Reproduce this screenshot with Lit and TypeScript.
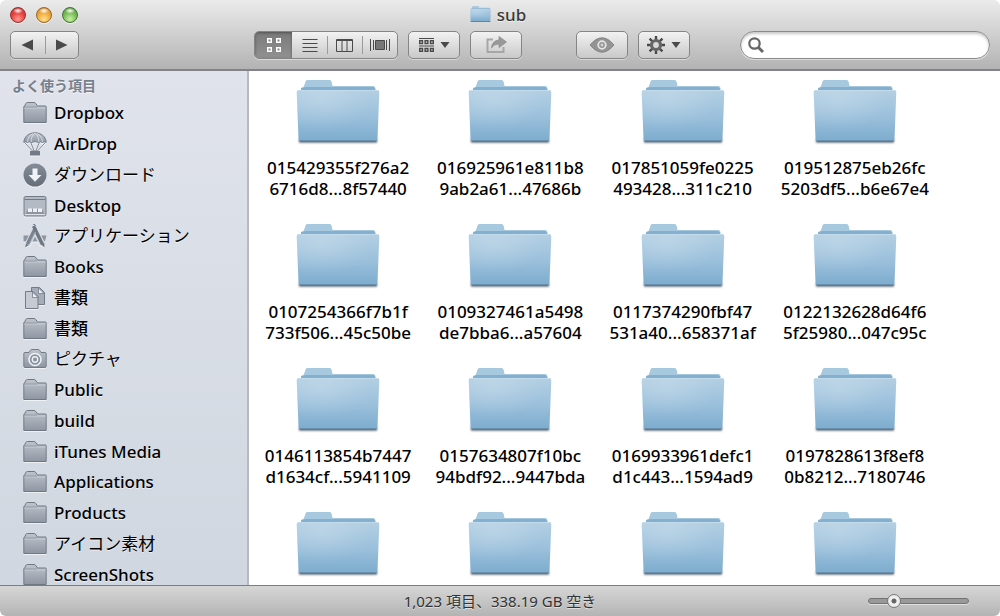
import { LitElement, html, svg, css, nothing } from "lit";
import { customElement, property, state } from "lit/decorators.js";
import { classMap } from "lit/directives/class-map.js";

type IconName = "folder" | "airdrop" | "download" | "desktop" | "apps" | "documents" | "camera";

interface Place {
  label: string;
  icon: IconName;
}

const PLACES: Place[] = [
  { label: "Dropbox", icon: "folder" },
  { label: "AirDrop", icon: "airdrop" },
  { label: "ダウンロード", icon: "download" },
  { label: "Desktop", icon: "desktop" },
  { label: "アプリケーション", icon: "apps" },
  { label: "Books", icon: "folder" },
  { label: "書類", icon: "documents" },
  { label: "書類", icon: "folder" },
  { label: "ピクチャ", icon: "camera" },
  { label: "Public", icon: "folder" },
  { label: "build", icon: "folder" },
  { label: "iTunes Media", icon: "folder" },
  { label: "Applications", icon: "folder" },
  { label: "Products", icon: "folder" },
  { label: "アイコン素材", icon: "folder" },
  { label: "ScreenShots", icon: "folder" },
];

const FOLDERS: string[][] = [
  ["015429355f276a2", "6716d8...8f57440"],
  ["016925961e811b8", "9ab2a61...47686b"],
  ["017851059fe0225", "493428...311c210"],
  ["019512875eb26fc", "5203df5...b6e67e4"],
  ["0107254366f7b1f", "733f506...45c50be"],
  ["0109327461a5498", "de7bba6...a57604"],
  ["0117374290fbf47", "531a40...658371af"],
  ["0122132628d64f6", "5f25980...047c95c"],
  ["0146113854b7447", "d1634cf...5941109"],
  ["0157634807f10bc", "94bdf92...9447bda"],
  ["0169933961defc1", "d1c443...1594ad9"],
  ["0197828613f8ef8", "0b8212...7180746"],
  [],
  [],
  [],
  [],
];

const FONT = css`"Noto Sans", "Noto Sans CJK JP", sans-serif`;

/* Small grey sidebar glyphs, all on a 24 x 24 grid. */
const GLYPHS = {
  folder: svg`
    <path d="M.8 21.500V6q0-1 1-1.200L2.800 2.500Q3.200 1.500 4.500 1.500h6.500q1 0 1.500.7L14.500 5h8q.7 0 .7.700V21.500z" fill="url(#g)" stroke="#6f7782"/>
    <path d="M1.500 7h21" stroke="#c9ced6"/><path d="M1 6h13" stroke="#8b939f" stroke-width=".8"/>`,
  airdrop: svg`
    <path d="M2 11 9.500 19h5L22 11M8 11l3 8M16 11l-3 8" fill="none" stroke="#838b96"/>
    <path d="M.8 10.500C1 4.500 6 .8 12 .8s11 3.700 11.200 9.700q-1.800-1.500-3.700 0-1.800-1.500-3.700 0-3.800-1.800-7.600 0-1.900-1.500-3.700 0-1.900-1.500-3.700 0z" fill="url(#g)" stroke="#737b87"/>
    <path d="M8.200 10Q8 4 12 1q4 3 3.800 9M4.500 10Q5 4 10 1.500M19.500 10Q19 4 14 1.500" fill="none" stroke="#e0e4ea" stroke-width=".8"/>
    <rect x="7" y="19" width="10" height="4.500" fill="#737b87"/>`,
  download: svg`
    <circle cx="12" cy="12" r="11.500" fill="url(#d)"/>
    <path d="M9.500 5.500h5v6.500h4L12 18.800 5.500 12h4z" fill="#f0f3f7"/>`,
  desktop: svg`
    <rect x="1" y="2.500" width="22" height="19.500" rx="1.500" fill="#b4bac4" stroke="#737b87"/>
    <path d="M1.500 5.500h21" stroke="#737b87"/>
    <path d="M2 20.800 5 15h14l3 5.800z" fill="#8d95a1"/>
    <path d="M5 14.500h4V18H5zM10 14.500h4V18h-4zM15 14.500h4V18h-4z" fill="#eef1f5"/>
    <path d="M2 20.500h20" stroke="#dfe3e8"/>`,
  apps: svg`
    <path d="M.5 11.500H23.500L22 17.500H.5z" fill="#8d95a1"/>
    <path d="M12 6 4.500 20.500M12 6l7.500 14.500" stroke="#d9dee6" stroke-width="6"/>
    <path d="M12.500 4 4.500 20" stroke="#7b8390" stroke-width="3.600"/>
    <path d="m10.500 2 9 18.500" stroke="#6f7782" stroke-width="3.400"/>
    <path d="m12.500 8-5.500 11" stroke="#aeb5c0" stroke-width="1"/>
    <path d="m2.800 19.500-.5 4 3.700-2.500zM18 20.500l3.500 3-.2-4.500z" fill="#6f7782"/>
    <path d="m10.200 1 1-1 1.500 2" stroke="#6f7782" fill="none"/>`,
  documents: svg`
    <path d="M8.500 1.500h8l5 5v12h-13z" fill="#a5adb9" stroke="#737b87"/>
    <path d="M15.500 2v5.500h5.500z" fill="#eef1f5" stroke="#737b87" stroke-width=".8"/>
    <path d="M2.500 5.500H10l5 5v12H2.500z" fill="#c5cad3" stroke="#737b87"/>
    <path d="M9.500 6v5.500H15z" fill="#eef1f5" stroke="#737b87" stroke-width=".8"/>`,
  camera: svg`
    <path d="M2 5.500h4l1.500-2.300q.5-.7 1.500-.7h6q1 0 1.500.7L18 5.500h4q1.200 0 1.200 1.200v12.600q0 1.200-1.200 1.200H2q-1.200 0-1.200-1.200V6.700Q.8 5.500 2 5.500z" fill="url(#g)" stroke="#737b87"/>
    <circle cx="12" cy="12.500" r="6" fill="#8a929e" stroke="#eef1f5" stroke-width="1.600"/>
    <circle cx="12" cy="12.500" r="2.700" fill="#8a929e" stroke="#eef1f5" stroke-width="1.400"/>`,
};

@customElement("place-icon")
class PlaceIcon extends LitElement {
  @property() name: IconName = "folder";

  static styles = css`
    :host {
      display: block;
      width: 24px;
      height: 24px;
      filter: drop-shadow(0 1px 0 rgba(255, 255, 255, 0.6));
    }
    .glyph {
      display: block;
      width: 100%;
      height: 100%;
    }
  `;

  render() {
    return html`<svg class="glyph" viewBox="0 0 24 24" aria-hidden="true">
      <defs>
        <linearGradient id="g" x1="0" y1="0" x2="0" y2="1">
          <stop offset="0" stop-color="#bfc4cc" />
          <stop offset="1" stop-color="#8e96a2" />
        </linearGradient>
        <linearGradient id="d" x1="0" y1="0" x2="0" y2="1">
          <stop offset="0" stop-color="#858d98" />
          <stop offset="1" stop-color="#656d79" />
        </linearGradient>
      </defs>
      ${GLYPHS[this.name]}
    </svg>`;
  }
}

@customElement("blue-folder")
class BlueFolder extends LitElement {
  static styles = css`
    :host {
      display: block;
    }
    .art {
      display: block;
      width: 100%;
    }
  `;

  render() {
    return html`<svg class="art" viewBox="0 0 84 66" aria-hidden="true">
      <defs>
        <linearGradient id="front" x1="0" y1="0" x2="0" y2="1">
          <stop offset="0" stop-color="#b3cfe3" />
          <stop offset=".5" stop-color="#9cc1dc" />
          <stop offset="1" stop-color="#7dacce" />
        </linearGradient>
        <radialGradient id="shine" cx=".3" cy=".2" r=".6">
          <stop offset="0" stop-color="#fff" stop-opacity=".18" />
          <stop offset="1" stop-color="#fff" stop-opacity="0" />
        </radialGradient>
        <filter id="soft" x="-5%" y="-100%" width="110%" height="300%">
          <feGaussianBlur stdDeviation=".8" />
        </filter>
      </defs>
      <rect x="3" y="60" width="78" height="3.500" fill="#46586a" filter="url(#soft)" />
      <path d="M5 14V9l3-1.500 1.500-4.500Q10 1 12 1h21q2 0 2.500 2l1 4H77q2 0 2.500 2l.5 5z" fill="#a5c8de" />
      <path d="M36.500 8H76.500q2 0 2.500 2v2H5V9.500l4-1.500z" fill="#84afcf" />
      <path d="M9.500 3Q10 1 12 1h21q2 0 2.500 2l1 5H8z" fill="#a7c9df" />
      <path d="M3 11h78q2.500 0 2.300 2.500L81.500 60q-.1 2-2 2h-75q-1.900 0-2-2L.7 13.500Q.5 11 3 11z" fill="url(#front)" />
      <path d="M3 11h78q2.500 0 2.300 2.500L81.500 60q-.1 2-2 2h-75q-1.900 0-2-2L.7 13.500Q.5 11 3 11z" fill="url(#shine)" />
      <path d="M2.500 11.500h79" stroke="#c3dbeb" />
      <path d="M3.500 62h77" stroke="#56748c" />
    </svg>`;
  }
}

@customElement("window-toolbar")
class WindowToolbar extends LitElement {
  @state() private view = 0;

  static styles = css`
    :host {
      display: flex;
      flex-direction: column;
      box-sizing: border-box;
      height: 71px;
      padding: 0 10px;
      border-bottom: 2px solid #838387;
      border-radius: 6px 6px 0 0;
      background: linear-gradient(#ebebeb, #d2d2d2 45%, #b3b3b3);
      font-family: ${FONT};
    }
    .title-row {
      display: grid;
      grid-template-columns: 1fr auto 1fr;
      align-items: center;
      height: 29px;
      margin-bottom: 2px;
    }
    .lights {
      display: flex;
      gap: 10px;
    }
    .light {
      width: 16px;
      height: 16px;
      padding: 0;
      border: 1px solid;
      border-radius: 50%;
      box-shadow: 0 1px 0 rgba(255, 255, 255, 0.6);
    }
    .close {
      border-color: #8f2f2c;
      background: radial-gradient(ellipse 5px 3px at 50% 20%, #fff, #fff0), radial-gradient(circle at 50% 80%, #ff9a92, #e8423e 50%, #b92f2e);
    }
    .minimize {
      border-color: #96652a;
      background: radial-gradient(ellipse 5px 3px at 50% 20%, #fff, #fff0), radial-gradient(circle at 50% 80%, #ffe28c, #f0aa3c 50%, #c5822c);
    }
    .zoom {
      border-color: #447035;
      background: radial-gradient(ellipse 5px 3px at 50% 20%, #fff, #fff0), radial-gradient(circle at 50% 80%, #c9f2a2, #78bd58 50%, #4c8f3c);
    }
    .title {
      display: flex;
      align-items: center;
      gap: 6px;
      margin: 0;
      padding-right: 4px;
      font-size: 17px;
      font-weight: 500;
      line-height: 24px;
      color: #3a3a3a;
      text-shadow: 0 1px 0 rgba(255, 255, 255, 0.6);
    }
    .title-folder {
      width: 21px;
    }
    .tools {
      display: flex;
      height: 28px;
    }
    .group {
      display: flex;
      flex: none;
      box-sizing: border-box;
      border: 1px solid #858585;
      border-radius: 5px;
      overflow: hidden;
      background: linear-gradient(#f2f2f2, #c9c9c9);
      box-shadow: 0 1px 0 rgba(255, 255, 255, 0.45);
    }
    .group + .group {
      margin-left: 10px;
    }
    .group.views {
      width: 144px;
      margin-left: 175px;
    }
    .group.quick {
      margin-left: 54px;
    }
    .nav {
      width: 69px;
    }
    .tool {
      position: relative;
      display: flex;
      flex: none;
      align-items: center;
      justify-content: center;
      gap: 6px;
      padding: 0;
      border: 0;
      background: none;
      color: #4a4a4a;
    }
    .nav .tool {
      flex: 1;
    }
    .views .tool {
      width: 35px;
    }
    .views .tool:first-child {
      width: 37px;
    }
    .single .tool {
      width: 50px;
    }
    .tool + .tool::before {
      content: "";
      position: absolute;
      left: 0;
      top: 4px;
      bottom: 4px;
      width: 1px;
      background: #9b9b9b;
    }
    .tool.active {
      background: linear-gradient(#7a7a7a, #919191);
      box-shadow: inset 0 1px 3px rgba(0, 0, 0, 0.35);
      color: #fff;
    }
    .tool.active + .tool::before {
      display: none;
    }
    .faint {
      color: #949494;
    }
    .pic {
      display: block;
      flex: none;
      fill: none;
      stroke: currentColor;
    }
    .search {
      display: flex;
      flex: 1;
      align-items: center;
      gap: 6px;
      box-sizing: border-box;
      min-width: 0;
      margin-left: 50px;
      padding: 0 12px 0 6px;
      border: 1px solid #8a8a8a;
      border-radius: 14px;
      background: #fff;
      box-shadow: inset 0 2px 3px rgba(0, 0, 0, 0.22), 0 1px 0 rgba(255, 255, 255, 0.5);
      color: #666;
    }
    .query {
      flex: 1;
      min-width: 0;
      padding: 0;
      border: 0;
      outline: 0;
      background: none;
      font: 15px ${FONT};
    }
  `;

  private viewButton(index: number, label: string, picture: unknown) {
    return html`<button
      class=${classMap({ tool: true, active: this.view === index })}
      aria-label=${label}
      aria-pressed=${this.view === index}
      @click=${() => (this.view = index)}
    >
      ${picture}
    </button>`;
  }

  render() {
    const arrow = html`<svg class="pic" width="10" height="6" viewBox="0 0 10 6"><path d="M.5 0h9L5 6z" fill="currentColor" stroke="none" /></svg>`;
    return html`
      <div class="title-row">
        <div class="lights">
          <button class="light close" aria-label="閉じる"></button>
          <button class="light minimize" aria-label="しまう"></button>
          <button class="light zoom" aria-label="拡大"></button>
        </div>
        <h1 class="title"><blue-folder class="title-folder"></blue-folder>sub</h1>
      </div>
      <div class="tools">
        <div class="group nav">
          <button class="tool" aria-label="戻る">
            <svg class="pic" width="13" height="12" viewBox="0 0 13 12"><path d="M.5 6 12 .5v11z" fill="currentColor" stroke="none" /></svg>
          </button>
          <button class="tool" aria-label="進む">
            <svg class="pic" width="13" height="12" viewBox="0 0 13 12"><path d="M12.500 6 1 .5v11z" fill="currentColor" stroke="none" /></svg>
          </button>
        </div>
        <div class="group views">
          ${this.viewButton(0, "アイコン", html`<svg class="pic" width="16" height="16" viewBox="0 0 16 16" stroke-width="1.500"><path d="M1.750 1.750h3.500v3.500h-3.500zM10.750 1.750h3.500v3.500h-3.500zM1.750 10.750h3.500v3.500h-3.500zM10.750 10.750h3.500v3.500h-3.500z" /></svg>`)}
          ${this.viewButton(1, "リスト", html`<svg class="pic" width="16" height="14" viewBox="0 0 16 14"><path d="M.5 1.500h15M.5 5.500h15M.5 9.500h15M.5 13.500h15" /></svg>`)}
          ${this.viewButton(2, "カラム", html`<svg class="pic" width="17" height="13" viewBox="0 0 17 13"><path d="M.5 .5h16v12H.5zM6 1v11M11 1v11M.5 1.500h16" /></svg>`)}
          ${this.viewButton(3, "Cover Flow", html`<svg class="pic" width="20" height="14" viewBox="0 0 20 14"><path d="M.5 1v12M3.500 2v10M16.500 2v10M19.500 1v12" /><path d="M5.500 2.500h9v9h-9z" fill="#777" /></svg>`)}
        </div>
        <div class="group single">
          <button class="tool" aria-label="並べ替え">
            <svg class="pic" width="15" height="16" viewBox="0 0 15 16"><path d="M0 1.500h15M0 9h15" stroke-width="1.200" /><path d="M.7 3.700h2.800v2.800H.7zM6.100 3.700h2.800v2.800H6.100zM11.500 3.700h2.800v2.800h-2.800zM.7 11.500h2.800v2.800H.7zM6.100 11.500h2.800v2.800H6.100zM11.500 11.500h2.800v2.800h-2.800z" stroke-width="1.400" /></svg>
            ${arrow}
          </button>
        </div>
        <div class="group single">
          <button class="tool faint" aria-label="共有">
            <svg class="pic" width="22" height="18" viewBox="0 0 22 18"><path d="M8 3.500H2.500v12.500H18.500v-5" stroke-width="2" stroke="#a6a6a6" /><path d="M6.500 12Q7 4.500 14 4V.5L21.500 6 14 11.500V8Q9 8 6.500 12z" fill="#999" stroke="#8a8a8a" stroke-width=".7" /></svg>
          </button>
        </div>
        <div class="group single quick">
          <button class="tool faint" aria-label="クイックルック">
            <svg class="pic" width="26" height="16" viewBox="0 0 26 16"><path d="M1 8Q7 .8 13 .8T25 8Q19 15.200 13 15.200T1 8z" fill="currentColor" stroke="#858585" /><circle cx="13" cy="8" r="3.800" stroke="#e4e4e4" stroke-width="1.800" /><circle cx="13" cy="8" r="1.400" fill="#d5d5d5" stroke="none" /></svg>
          </button>
        </div>
        <div class="group single">
          <button class="tool" aria-label="アクション">
            <svg class="pic" width="18" height="18" viewBox="0 0 18 18"><path d="M9 0v18M0 9h18M2.600 2.600l12.800 12.800M15.400 2.600 2.600 15.400" stroke-width="2.400" /><circle cx="9" cy="9" r="4.500" fill="#d8d8d8" stroke="#666" stroke-width="3.200" /></svg>
            ${arrow}
          </button>
        </div>
        <label class="search">
          <svg class="pic" width="18" height="18" viewBox="0 0 18 18" aria-hidden="true"><circle cx="7.500" cy="7.500" r="5.200" stroke-width="2.200" /><path d="m11.500 11.500 4.500 4.500" stroke-width="3" /></svg>
          <input class="query" type="search" aria-label="検索" />
        </label>
      </div>
    `;
  }
}

@customElement("app-root")
class AppRoot extends LitElement {
  @state() private iconSize = 21;

  static styles = css`
    :host {
      display: flex;
      flex-direction: column;
      height: 100vh;
      overflow: hidden;
      background: #fff;
      font-family: ${FONT};
      font-weight: 500;
      color: #000;
    }
    .body {
      display: flex;
      flex: 1;
      min-height: 0;
    }
    .sidebar {
      display: flex;
      flex: none;
      flex-direction: column;
      box-sizing: border-box;
      width: 249px;
      overflow: hidden;
      border-right: 2px solid #b6b9c0;
      background: linear-gradient(#e0e3eb, #d0d7e0);
    }
    .heading {
      margin: 0;
      padding: 4px 12px 1px;
      font-size: 14px;
      font-weight: 700;
      line-height: 22px;
      color: #75808d;
      text-shadow: 0 1px 0 rgba(255, 255, 255, 0.7);
    }
    .places {
      display: grid;
      flex: 1;
      grid-auto-rows: 1fr;
      margin: 0 0 -5px;
      padding: 0;
      list-style: none;
    }
    .place {
      display: flex;
      align-items: center;
      gap: 7px;
      height: 100%;
      padding-left: 23px;
      font-size: 17px;
      line-height: 24px;
      color: #000;
      text-decoration: none;
      text-shadow: 0 1px 0 rgba(255, 255, 255, 0.6);
    }
    .place.kana {
      font-weight: 400;
    }
    .content {
      flex: 1;
      min-width: 0;
      overflow: hidden;
    }
    .folders {
      display: grid;
      grid-template-columns: repeat(4, 1fr);
      grid-auto-rows: 144px;
      margin: 0;
      padding: 8px 59px 0 3px;
      list-style: none;
    }
    .folder {
      display: flex;
      flex-direction: column;
      align-items: center;
      gap: 12px;
      font-size: 17px;
      line-height: 21px;
      color: #000;
      text-align: center;
      text-decoration: none;
    }
    .folder-icon {
      width: 84px;
    }
    .status {
      display: grid;
      grid-template-columns: 1fr auto 1fr;
      align-items: center;
      box-sizing: border-box;
      height: 31px;
      padding: 0 31px;
      border-top: 1px solid #7d7d7d;
      border-radius: 0 0 6px 6px;
      background: linear-gradient(#d6d6d6, #b4b4b4);
      font-size: 15px;
      line-height: 20px;
      color: #333;
      text-shadow: 0 1px 0 rgba(255, 255, 255, 0.5);
    }
    .summary {
      grid-column: 2;
      font-weight: 400;
    }
    .size {
      justify-self: end;
      width: 101px;
      height: 14px;
      margin: 0;
      appearance: none;
      background: none;
    }
    .size::-webkit-slider-runnable-track {
      box-sizing: border-box;
      height: 6px;
      border: 1px solid #747474;
      border-radius: 3px;
      background: #999;
      box-shadow: 0 1px 0 rgba(255, 255, 255, 0.5);
    }
    .size::-webkit-slider-thumb {
      appearance: none;
      box-sizing: border-box;
      width: 14px;
      height: 14px;
      margin-top: -5px;
      border: 1px solid #7a7a7a;
      border-radius: 50%;
      background: radial-gradient(circle, #666 2px, #f4f4f4 3px, #dcdcdc);
    }
  `;

  render() {
    return html`
      <window-toolbar></window-toolbar>
      <div class="body">
        <nav class="sidebar">
          <h2 class="heading">よく使う項目</h2>
          <ul class="places">
            ${PLACES.map(
              (p) => html`<li>
                <a class=${classMap({ place: true, kana: /[ァ-ヶ]/.test(p.label) })} href="#"
                  ><place-icon name=${p.icon}></place-icon>${p.label}</a
                >
              </li>`
            )}
          </ul>
        </nav>
        <main class="content">
          <ul class="folders">
            ${FOLDERS.map(
              ([first, second]) => html`<li>
                <a class="folder" href="#">
                  <blue-folder class="folder-icon"></blue-folder>
                  ${first ? html`<span>${first}<br />${second}</span>` : nothing}
                </a>
              </li>`
            )}
          </ul>
        </main>
      </div>
      <footer class="status">
        <span class="summary">1,023 項目、338.19 GB 空き</span>
        <input
          class="size"
          type="range"
          min="0"
          max="100"
          aria-label="アイコンサイズ"
          .value=${String(this.iconSize)}
          @input=${(e: Event) => (this.iconSize = Number((e.target as HTMLInputElement).value))}
        />
      </footer>
    `;
  }
}
